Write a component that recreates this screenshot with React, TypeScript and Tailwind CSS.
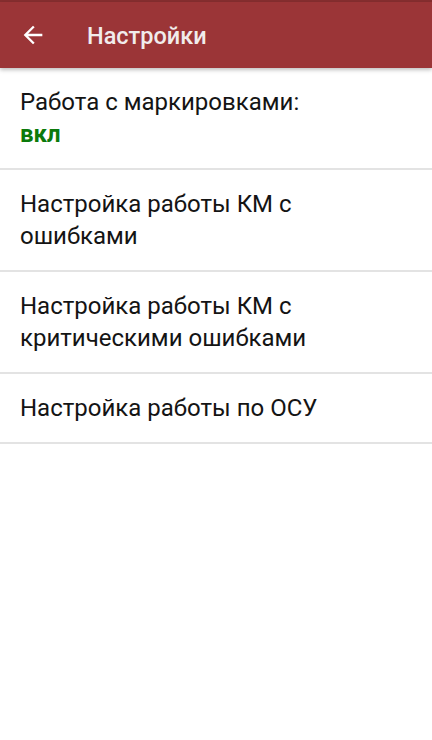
import React from "react";

function BackArrow() {
  return (
    <svg width="28" height="28" viewBox="0 0 24 24" className="block">
      <path d="M20 11H7.83l5.59-5.59L12 4l-8 8 8 8 1.41-1.41L7.83 13H20v-2z" fill="#ffffff" />
    </svg>
  );
}

const items: { title: string; value?: string }[] = [
  { title: "Работа с маркировками:", value: "вкл" },
  { title: "Настройка работы КМ с ошибками" },
  { title: "Настройка работы КМ с критическими ошибками" },
  { title: "Настройка работы по ОСУ" },
];

export default function App() {
  return (
    <div
      className="w-[432px] h-[740px] bg-white flex flex-col overflow-hidden"
      style={{ fontFamily: "Roboto, 'Noto Sans', sans-serif" }}
    >
      <div className="h-[2px] bg-[#862e2f]" />
      <header className="relative z-10 h-[66px] bg-[#9b3537] flex items-center shadow-[0_2px_4px_rgba(0,0,0,0.25)]">
        <div className="w-[87px] pl-[19px] flex items-center">
          <BackArrow />
        </div>
        <h1 className="pt-[3px] text-[23.5px] font-medium text-[#f1ecec]">Настройки</h1>
      </header>
      <ul className="flex flex-col">
        {items.map((it) => (
          <li key={it.title} className="border-b-2 border-[#e3e3e3]">
            <div className="px-5 py-[18px] pr-[100px] text-[24px] leading-[32px] text-[#141414]">
              <div>{it.title}</div>
              {it.value && <div className="font-bold text-[#0b7a0b]">{it.value}</div>}
            </div>
          </li>
        ))}
      </ul>
    </div>
  );
}
